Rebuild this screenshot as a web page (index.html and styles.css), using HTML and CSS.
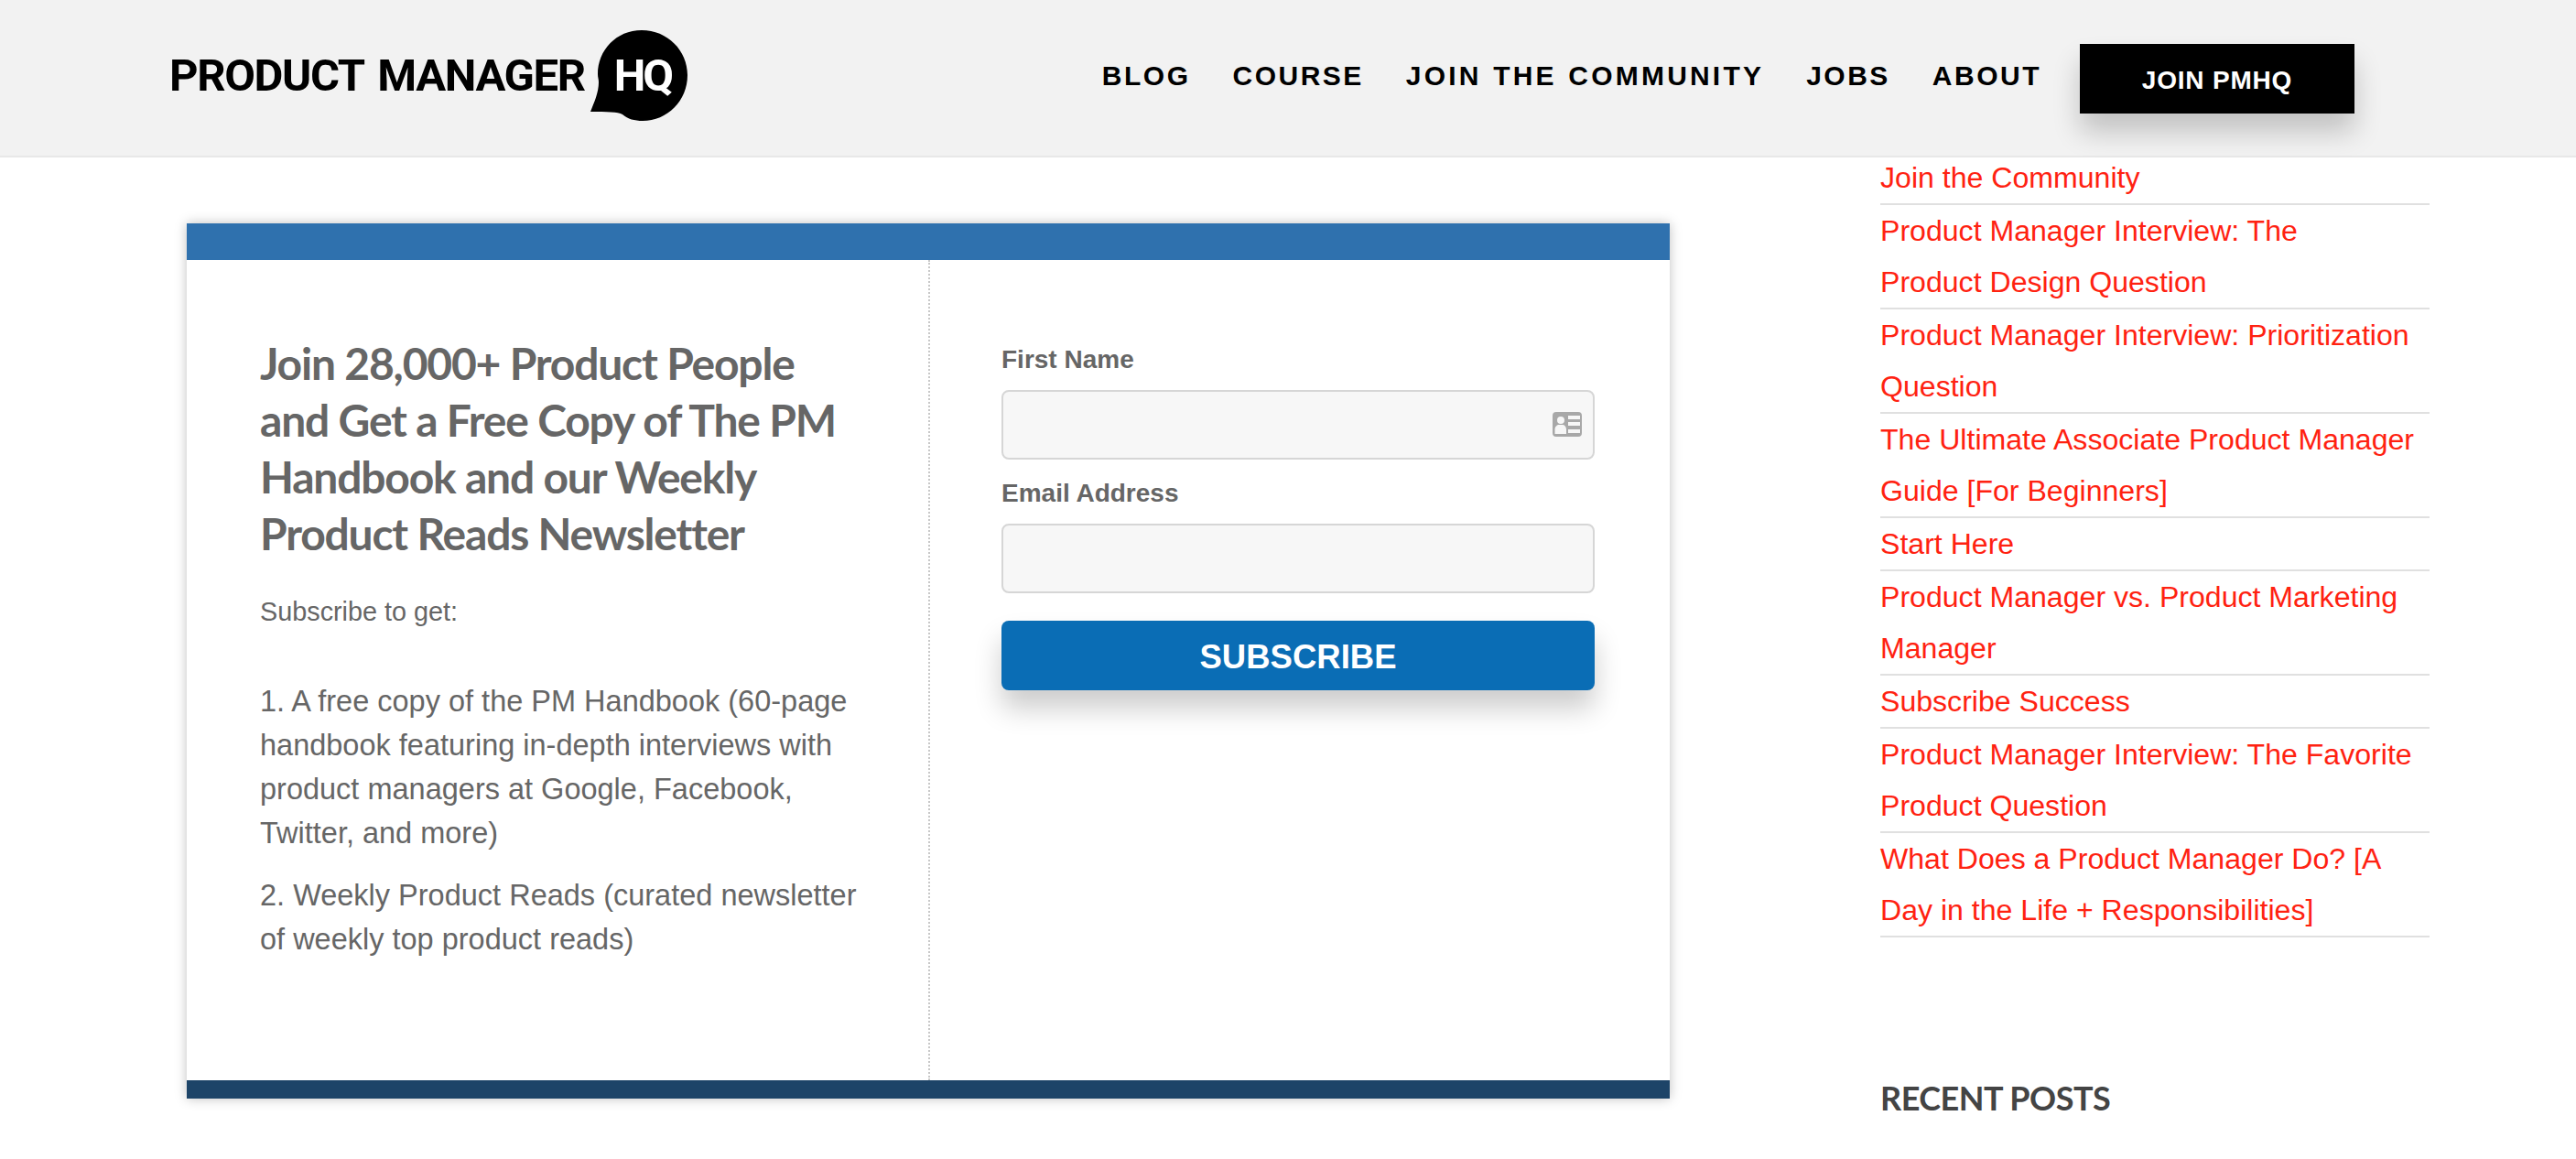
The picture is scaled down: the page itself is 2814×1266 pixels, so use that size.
FILE: index.html
```html
<!DOCTYPE html>
<html lang="en">
<head>
    <meta charset="UTF-8">
    <meta name="viewport" content="width=device-width, initial-scale=1.0">
    <title>Product Manager HQ</title>
    <link rel="stylesheet" href="styles.css">
</head>

<body>
    <header class="site-header">
        <a class="logo" href="#">
            <span class="logo-text">PRODUCT MANAGER</span>
            <span class="logo-badge">
                <svg class="logo-bubble" width="106" height="99" viewBox="0 0 106 99">
                    <path d="M56 0C84 0 106 22 106 49C106 77 84 99 57 99C48 99 41 97 35 92C30 89 18 89 0 89C4 79 9 68 9 57C9 53 8 52 8 48C8 22 28 0 56 0Z"/>
                </svg>
                <span class="logo-hq">HQ</span>
            </span>
        </a>
        <nav class="main-nav">
            <a href="#">BLOG</a>
            <a href="#">COURSE</a>
            <a class="nav-long" href="#">JOIN THE COMMUNITY</a>
            <a href="#">JOBS</a>
            <a href="#">ABOUT</a>
            <a class="join-btn" href="#">JOIN PMHQ</a>
        </nav>
    </header>

    <main class="page">
        <section class="optin">
            <div class="optin-top"></div>
            <div class="optin-body">
                <div class="optin-copy">
                    <h2>Join 28,000+ Product People and Get a Free Copy of The PM Handbook and our Weekly Product Reads Newsletter</h2>
                    <p class="optin-lead">Subscribe to get:</p>
                    <p class="optin-item">1. A free copy of the PM Handbook (60-page handbook featuring in-depth interviews with product managers at Google, Facebook, Twitter, and more)</p>
                    <p class="optin-item">2. Weekly Product Reads (curated newsletter of weekly top product reads)</p>
                </div>
                <form class="optin-form">
                    <label for="first-name">First Name</label>
                    <div class="field">
                        <input type="text" id="first-name">
                        <svg class="field-icon" width="32" height="27" viewBox="0 0 32 27">
                            <path fill-rule="evenodd" d="M4 0H28A4 4 0 0 1 32 4V23A4 4 0 0 1 28 27H4A4 4 0 0 1 0 23V4A4 4 0 0 1 4 0ZM9 5A4 4 0 1 0 9 13A4 4 0 1 0 9 5ZM2.500 24H15V19C15 16 13 14 11 14H7C5 14 2.500 16 2.500 19ZM17 4V8H30V4ZM17 11V15H30V11ZM17 19V23H30V19Z"/>
                        </svg>
                    </div>
                    <label for="email">Email Address</label>
                    <div class="field">
                        <input type="email" id="email">
                    </div>
                    <button type="button" class="subscribe-btn">SUBSCRIBE</button>
                </form>
            </div>
            <div class="optin-bottom"></div>
        </section>

        <aside class="sidebar">
            <ul class="page-list">
                <li><a href="#">Join the Community</a></li>
                <li><a href="#">Product Manager Interview: The<br>Product Design Question</a></li>
                <li><a href="#">Product Manager Interview: Prioritization Question</a></li>
                <li><a href="#">The Ultimate Associate Product Manager Guide [For Beginners]</a></li>
                <li><a href="#">Start Here</a></li>
                <li><a href="#">Product Manager vs. Product Marketing Manager</a></li>
                <li><a href="#">Subscribe Success</a></li>
                <li><a href="#">Product Manager Interview: The Favorite Product Question</a></li>
                <li><a href="#">What Does a Product Manager Do? [A Day in the Life + Responsibilities]</a></li>
            </ul>
            <h3 class="sidebar-title">RECENT POSTS</h3>
        </aside>
    </main>
</body>
</html>
```

FILE: styles.css
```css
html {
    overflow: hidden;
}

body {
    font-family: "Liberation Sans", Arial, sans-serif;
    background-color: #fff;
    margin: 0;
    padding: 0;
    color: #666;
}

a {
    text-decoration: none;
}

.site-header {
    position: relative;
    z-index: 2;
    display: flex;
    justify-content: space-between;
    align-items: center;
    box-sizing: border-box;
    height: 172px;
    padding: 0 242px 0 185px;
    background-color: #f2f2f2;
    border-bottom: 2px solid #e8e8e8;
}

.logo {
    display: flex;
    align-items: center;
    gap: 6px;
    color: #000;
    margin-top: -5px;
}

.logo-text {
    font-family: Roboto, sans-serif;
    font-size: 49px;
    font-weight: 700;
    letter-spacing: -1.400px;
    word-spacing: 5px;
    line-height: 99px;
    white-space: nowrap;
}

.logo-badge {
    position: relative;
    display: block;
    width: 106px;
    height: 99px;
}

.logo-bubble {
    display: block;
}

.logo-hq {
    position: absolute;
    left: 26px;
    top: 0;
    font-family: Roboto, sans-serif;
    font-size: 49px;
    font-weight: 700;
    letter-spacing: -3px;
    line-height: 99px;
    color: #fff;
}

.main-nav {
    display: flex;
    align-items: center;
    gap: 46px;
}

.main-nav a {
    color: #000;
    font-size: 30px;
    font-weight: 700;
    letter-spacing: 2.500px;
    margin-top: -4px;
}

.main-nav .nav-long {
    letter-spacing: 3.200px;
    word-spacing: 1px;
}

.main-nav .join-btn {
    display: block;
    width: 300px;
    height: 76px;
    margin: 2px 0 0 -4px;
    padding-top: 4px;
    box-sizing: border-box;
    background-color: #000;
    color: #fff;
    font-size: 28px;
    letter-spacing: 0.800px;
    line-height: 72px;
    text-align: center;
    box-shadow: 0 20px 30px rgba(0, 0, 0, 0.2);
}

.page {
    display: flex;
    align-items: flex-start;
    padding-left: 204px;
}

.optin {
    width: 1620px;
    margin-top: 72px;
    box-shadow: 0 0 12px rgba(0, 0, 0, 0.25);
}

.optin-top {
    height: 40px;
    background-color: #2f71ae;
}

.optin-bottom {
    height: 20px;
    background-color: #1d4468;
}

.optin-body {
    display: flex;
    height: 896px;
}

.optin-copy {
    box-sizing: border-box;
    width: 812px;
    padding: 82px 70px 0 80px;
    border-right: 2px dotted #c8c8c8;
}

.optin-copy h2 {
    margin: 0 0 30px;
    font-family: Lato, sans-serif;
    font-size: 48px;
    font-weight: 700;
    line-height: 62px;
    letter-spacing: -1.200px;
    color: #666;
}

.optin-lead {
    margin: 0 0 50px;
    font-size: 28.800px;
    line-height: 48px;
}

.optin-item {
    margin: 0 0 20px;
    font-size: 32.500px;
    line-height: 48px;
}

.optin-form {
    box-sizing: border-box;
    width: 808px;
    padding: 91px 82px 0 78px;
}

.optin-form label {
    display: block;
    font-size: 28px;
    font-weight: 700;
    line-height: 36px;
    color: #666;
    margin-bottom: 15px;
}

.field {
    position: relative;
    margin-bottom: 19px;
}

.field input {
    display: block;
    box-sizing: border-box;
    width: 100%;
    height: 76px;
    background-color: #f7f7f7;
    border: 2px solid #d6d6d6;
    border-radius: 8px;
    outline: none;
}

.field-icon {
    position: absolute;
    right: 14px;
    top: 24px;
    fill: #a8a8a8;
}

.subscribe-btn {
    display: block;
    width: 100%;
    height: 76px;
    margin-top: 30px;
    padding: 3px 0 0;
    border: none;
    border-radius: 8px;
    background-color: #0a6db5;
    color: #fff;
    font-family: "Liberation Sans", Arial, sans-serif;
    font-size: 36.500px;
    font-weight: 700;
    box-shadow: 0 20px 30px rgba(0, 0, 0, 0.2);
}

.sidebar {
    width: 600px;
    margin: -6px 0 0 230px;
}

.page-list {
    list-style-type: none;
    margin: 0;
    padding: 0;
}

.page-list li {
    border-bottom: 2px solid #e0e0e0;
    font-size: 32.100px;
    line-height: 56px;
}

.page-list a {
    color: #ff2211;
}

.sidebar-title {
    margin: 152px 0 0;
    font-family: Lato, sans-serif;
    font-size: 36px;
    font-weight: 700;
    line-height: 46px;
    letter-spacing: -0.500px;
    color: #444;
}
```
